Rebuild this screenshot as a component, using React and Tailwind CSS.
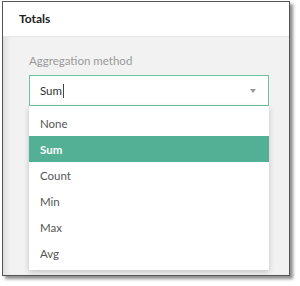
import React from 'react';

const options = ['None', 'Sum', 'Count', 'Min', 'Max', 'Avg'];

function App() {
  const selected = 'Sum';

  return (
    <div className="w-[300px] h-[286px] bg-white" style={{ fontFamily: 'Lato, "Open Sans", sans-serif' }}>
      <div className="ml-[2px] mt-[1px] w-[288px] h-[275px] border border-[#555] shadow-[3px_3px_3px_rgba(0,0,0,0.45)] flex flex-col overflow-hidden">
        <div className="h-[35px] shrink-0 bg-white border-b border-[#e6e6e6] flex items-center px-4">
          <span className="text-[12px] font-bold text-[#222]">Totals</span>
        </div>
        <div className="flex-1 bg-[#f2f2f2] shadow-[inset_6px_0_6px_-4px_rgba(0,0,0,0.12)] pl-[26px] pr-[20px] pt-[15px]">
          <div className="text-[11.5px] text-[#9a9a9a] mb-[6px]">Aggregation method</div>
          <div className="relative w-[240px]">
            <div className="h-[31px] bg-white border border-[#6cc3a0] flex items-center pl-[10px] pr-[12px]">
              <span className="text-[11.5px] text-[#333]">Sum</span>
              <span className="w-px h-[14px] bg-[#444] ml-px"></span>
              <span className="ml-auto w-0 h-0 border-l-[3.5px] border-r-[3.5px] border-t-[4px] border-l-transparent border-r-transparent border-t-[#999]"></span>
            </div>
            <div className="absolute left-0 top-[31px] w-[240px] bg-white pt-[4px] pb-[4px] shadow-[0_2px_6px_rgba(0,0,0,0.2)]">
              {options.map((opt) => (
                <div
                  key={opt}
                  className={
                    opt === selected
                      ? 'h-[26px] flex items-center pl-[11px] text-[11.5px] font-bold text-white bg-[#54b094]'
                      : 'h-[26px] flex items-center pl-[11px] text-[11.5px] text-[#555]'
                  }
                >
                  {opt}
                </div>
              ))}
            </div>
          </div>
        </div>
      </div>
    </div>
  );
}

export default App;
